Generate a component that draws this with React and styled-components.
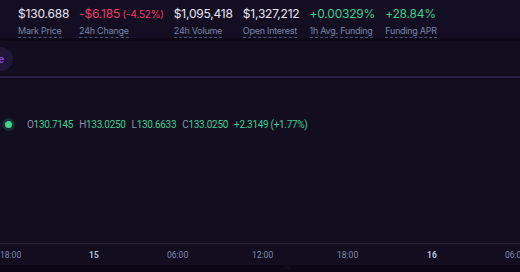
import React from "react";
import styled, { createGlobalStyle } from "styled-components";

const Global = createGlobalStyle`
  html, body { margin: 0; padding: 0; background: #130d20; }
  body { width: 520px; height: 272px; overflow: hidden; font-family: Inter, "Noto Sans", sans-serif; }
`;

const Page = styled.div`
  display: flex;
  flex-direction: column;
  width: 520px;
  height: 272px;
  background: #130d20;
  overflow: hidden;
`;

const Header = styled.div`
  display: flex;
  align-items: flex-start;
  gap: 10px;
  height: 41px;
  padding: 6px 0 0 18px;
  box-sizing: border-box;
  background: #140e22;
  border-bottom: 3px solid #0c0817;
`;

const Stat = styled.div`
  display: flex;
  flex-direction: column;
  gap: 3px;
`;

const Value = styled.div`
  font-size: 12px;
  line-height: 16px;
  color: ${(p) => p.$color || "#ebe6f5"};
  white-space: nowrap;
  letter-spacing: -0.2px;
`;

const Pct = styled.span`
  font-size: 10px;
`;

const Label = styled.div`
  align-self: flex-start;
  font-size: 9px;
  line-height: 12px;
  letter-spacing: -0.25px;
  color: #7b84a8;
  white-space: nowrap;
  border-bottom: 1px dashed #4b5375;
`;

const Toolbar = styled.div`
  display: flex;
  align-items: center;
  height: 35px;
  border-bottom: 2px solid #291f3e;
  overflow: hidden;
`;

const Pill = styled.div`
  margin-left: -33px;
  height: 24px;
  padding: 0 9px;
  border-radius: 12px;
  background: #21163a;
  color: #7a4fe0;
  font-size: 10px;
  font-weight: 700;
  display: flex;
  align-items: center;
`;

const Chart = styled.div`
  flex: 1;
  padding: 41px 0 0 4px;
`;

const Legend = styled.div`
  display: flex;
  align-items: center;
  gap: 9px;
  font-family: Roboto, "Noto Sans", sans-serif;
  font-size: 10px;
  color: #3ecf8e;
`;

const Dot = styled.div`
  width: 7px;
  height: 7px;
  border-radius: 50%;
  background: #3ed68f;
  box-shadow: 0 0 0 3px #1d2c33;
  margin-left: 1px;
  margin-right: 6px;
`;

const Ohlc = styled.span`
  display: flex;
  gap: 6px;
  white-space: nowrap;
  letter-spacing: -0.3px;
`;

const Key = styled.span`
  color: #8a90b0;
`;

const Axis = styled.div`
  position: relative;
  height: 21px;
  border-top: 1px solid #2a2338;
  font-family: Roboto, "Noto Sans", sans-serif;
  font-size: 8.5px;
`;

const Tick = styled.span`
  position: absolute;
  top: 6px;
  color: ${(p) => (p.$bold ? "#b7bed8" : "#8188a8")};
  font-weight: ${(p) => (p.$bold ? 700 : 400)};
  white-space: nowrap;
`;

const Bottom = styled.div`
  position: relative;
  height: 7px;
  background: #0b0716;
`;

const Notch = styled.div`
  position: absolute;
  left: 282px;
  top: -1px;
  width: 0;
  height: 0;
  border-left: 5px solid transparent;
  border-right: 5px solid transparent;
  border-bottom: 5px solid #130d20;
`;

const stats = [
  { v: "$130.688", l: "Mark Price" },
  { v: "-$6.185", pct: " (-4.52%)", l: "24h Change", c: "#ef3b6a" },
  { v: "$1,095,418", l: "24h Volume" },
  { v: "$1,327,212", l: "Open Interest" },
  { v: "+0.00329%", l: "1h Avg. Funding", c: "#3ecf8e" },
  { v: "+28.84%", l: "Funding APR", c: "#3ecf8e" },
];

const ticks = [
  { x: 0, t: "18:00" },
  { x: 89, t: "15", b: true },
  { x: 167, t: "06:00" },
  { x: 252, t: "12:00" },
  { x: 337, t: "18:00" },
  { x: 427, t: "16", b: true },
  { x: 505, t: "06:00" },
];

export default function App() {
  return (
    <Page>
      <Global />
      <Header>
        {stats.map((s) => (
          <Stat key={s.l}>
            <Value $color={s.c}>
              {s.v}
              {s.pct && <Pct>{s.pct}</Pct>}
            </Value>
            <Label>{s.l}</Label>
          </Stat>
        ))}
      </Header>
      <Toolbar>
        <Pill>Trade</Pill>
      </Toolbar>
      <Chart>
        <Legend>
          <Dot />
          <Ohlc>
            <span><Key>O</Key>130.7145</span>
            <span><Key>H</Key>133.0250</span>
            <span><Key>L</Key>130.6633</span>
            <span><Key>C</Key>133.0250</span>
            <span>+2.3149 (+1.77%)</span>
          </Ohlc>
        </Legend>
      </Chart>
      <Axis>
        {ticks.map((t) => (
          <Tick key={t.x} $bold={t.b} style={{ left: t.x }}>
            {t.t}
          </Tick>
        ))}
      </Axis>
      <Bottom>
        <Notch />
      </Bottom>
    </Page>
  );
}
